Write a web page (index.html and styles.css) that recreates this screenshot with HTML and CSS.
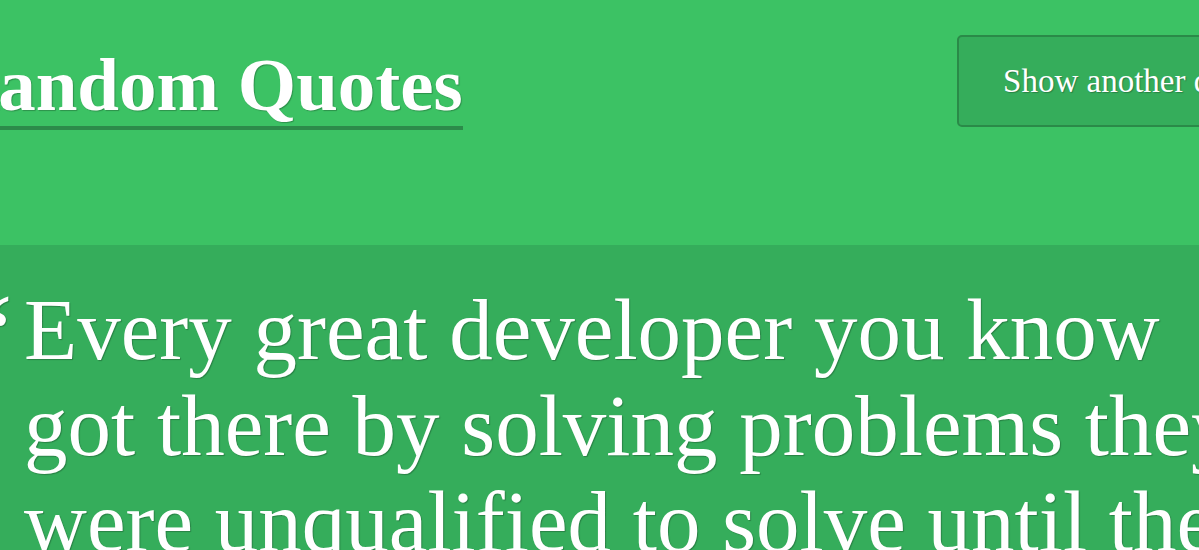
FILE: index.html
```html
<!DOCTYPE html>
<html lang="en">
<head>
<meta charset="utf-8">
<title>Random Quotes</title>
<link rel="stylesheet" href="styles.css">
</head>
<body>
<div class="page">
  <header class="header">
    <h1 class="title">Random Quotes</h1>
    <button class="btn" type="button">Show another quote</button>
  </header>
  <main class="quote-section">
    <span class="mark">&ldquo;</span>
    <blockquote class="quote">Every great developer you know<br>got there by solving problems they<br>were unqualified to solve until they<br>actually did it.</blockquote>
  </main>
</div>
</body>
</html>
```
FILE: styles.css
```css
html, body {
  margin: 0;
  padding: 0;
  overflow: hidden;
  background: #35ad5b;
}
body {
  font-family: "Liberation Serif", "Times New Roman", serif;
  color: #fff;
}
.page {
  width: 1440px;
  margin-left: -80px;
}
.header {
  background: #3cc264;
  height: 245px;
  box-sizing: border-box;
  display: flex;
  justify-content: space-between;
  align-items: flex-start;
  padding: 0 47px 0 24px;
}
.title {
  margin: 45px 0 0 0;
  font-size: 75px;
  line-height: 80px;
  font-weight: 700;
  padding-bottom: 1px;
  border-bottom: 4px solid #2c8b4a;
  text-shadow: 1px 1px 1px rgba(0, 0, 0, 0.25);
}
.btn {
  margin-top: 35px;
  height: 92px;
  box-sizing: border-box;
  padding: 0 44px;
  background: #35ad5b;
  border: 2px solid #2a8a48;
  border-radius: 5px;
  color: #fff;
  font-family: "Liberation Serif", "Times New Roman", serif;
  font-size: 33px;
  text-shadow: 1px 1px 1px rgba(0, 0, 0, 0.25);
  white-space: nowrap;
}
.quote-section {
  background: #35ad5b;
  display: flex;
  align-items: flex-start;
  padding: 37px 0 40px 42px;
  gap: 11px;
}
.mark {
  font-size: 115px;
  line-height: 110px;
  margin-top: -2px;
  text-shadow: 1px 1px 1px rgba(0, 0, 0, 0.25);
}
.quote {
  margin: 0;
  font-size: 87px;
  line-height: 96px;
  white-space: nowrap;
  text-shadow: 1px 1px 1px rgba(0, 0, 0, 0.25);
}
```
